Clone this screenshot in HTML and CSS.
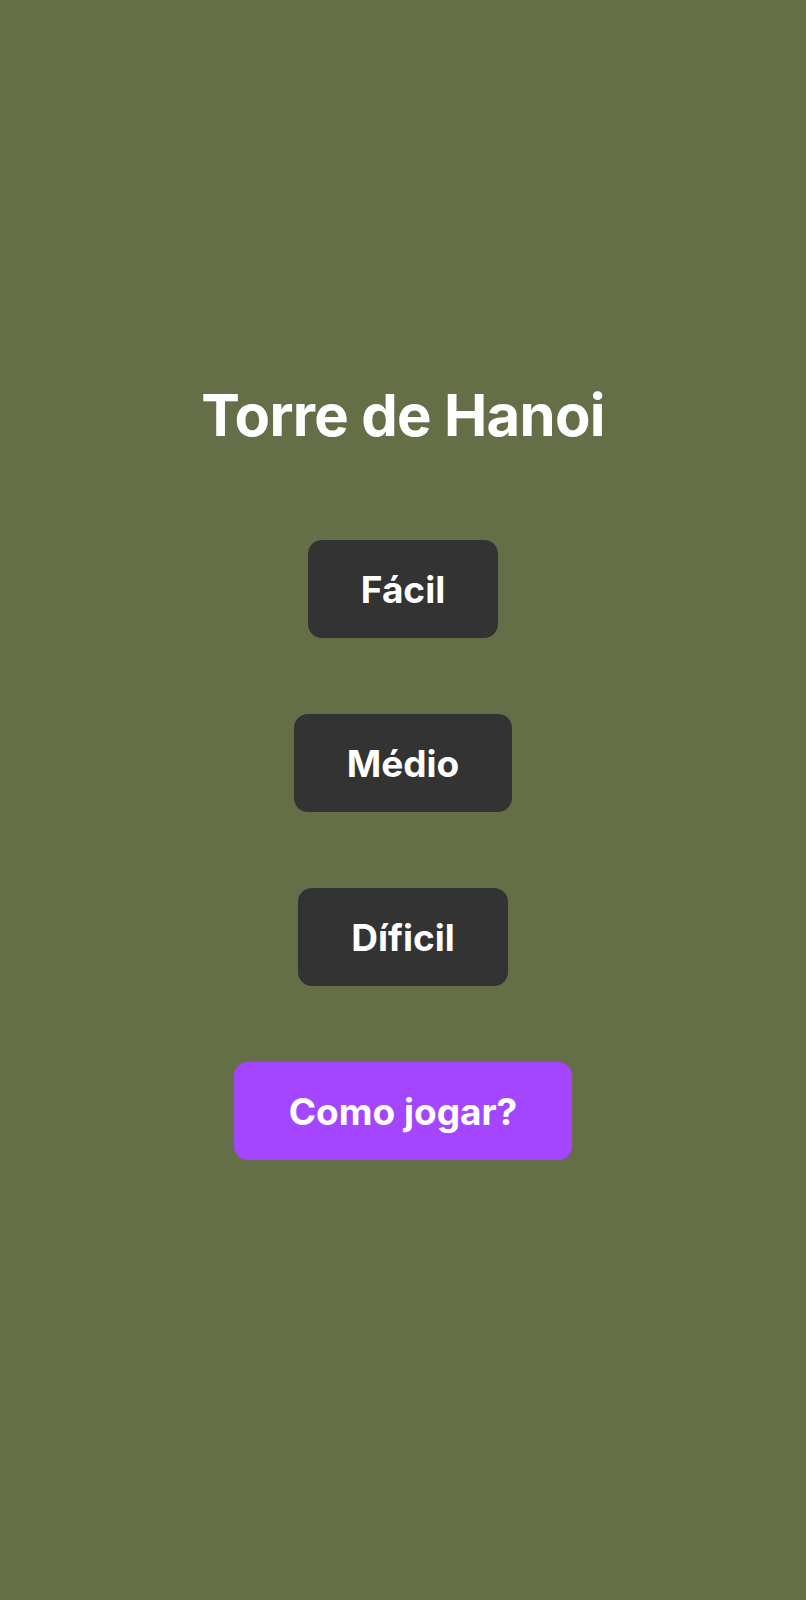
FILE: index.html
```html
<!DOCTYPE html>
<html lang="pt">
<head>
<meta charset="utf-8">
<title>Torre de Hanoi</title>
<link rel="stylesheet" href="styles.css">
</head>
<body>
<main class="menu">
  <h1 class="title">Torre de Hanoi</h1>
  <div class="buttons">
    <button class="btn btn-dark">Fácil</button>
    <button class="btn btn-dark">Médio</button>
    <button class="btn btn-dark">Díficil</button>
    <button class="btn btn-purple">Como jogar?</button>
  </div>
</main>
</body>
</html>
```
FILE: styles.css
```css
html, body {
  margin: 0;
  padding: 0;
}
body {
  background: #646e47;
  min-height: 1600px;
  font-family: Inter, "Noto Sans", sans-serif;
}
.menu {
  display: flex;
  flex-direction: column;
  align-items: center;
  padding-top: 380px;
}
.title {
  margin: 0;
  color: #ffffff;
  font-size: 58px;
  font-weight: 700;
  line-height: 70px;
  letter-spacing: -0.7px;
}
.buttons {
  display: flex;
  flex-direction: column;
  align-items: center;
  gap: 76px;
  margin-top: 90px;
}
.btn {
  height: 98px;
  padding: 0 53px;
  border: none;
  border-radius: 14px;
  color: #ffffff;
  font-family: Inter, "Noto Sans", sans-serif;
  font-size: 37px;
  font-weight: 700;
}
.btn-dark {
  background: #333333;
}
.btn-purple {
  background: #a445ff;
  padding: 0 55px;
}
```
